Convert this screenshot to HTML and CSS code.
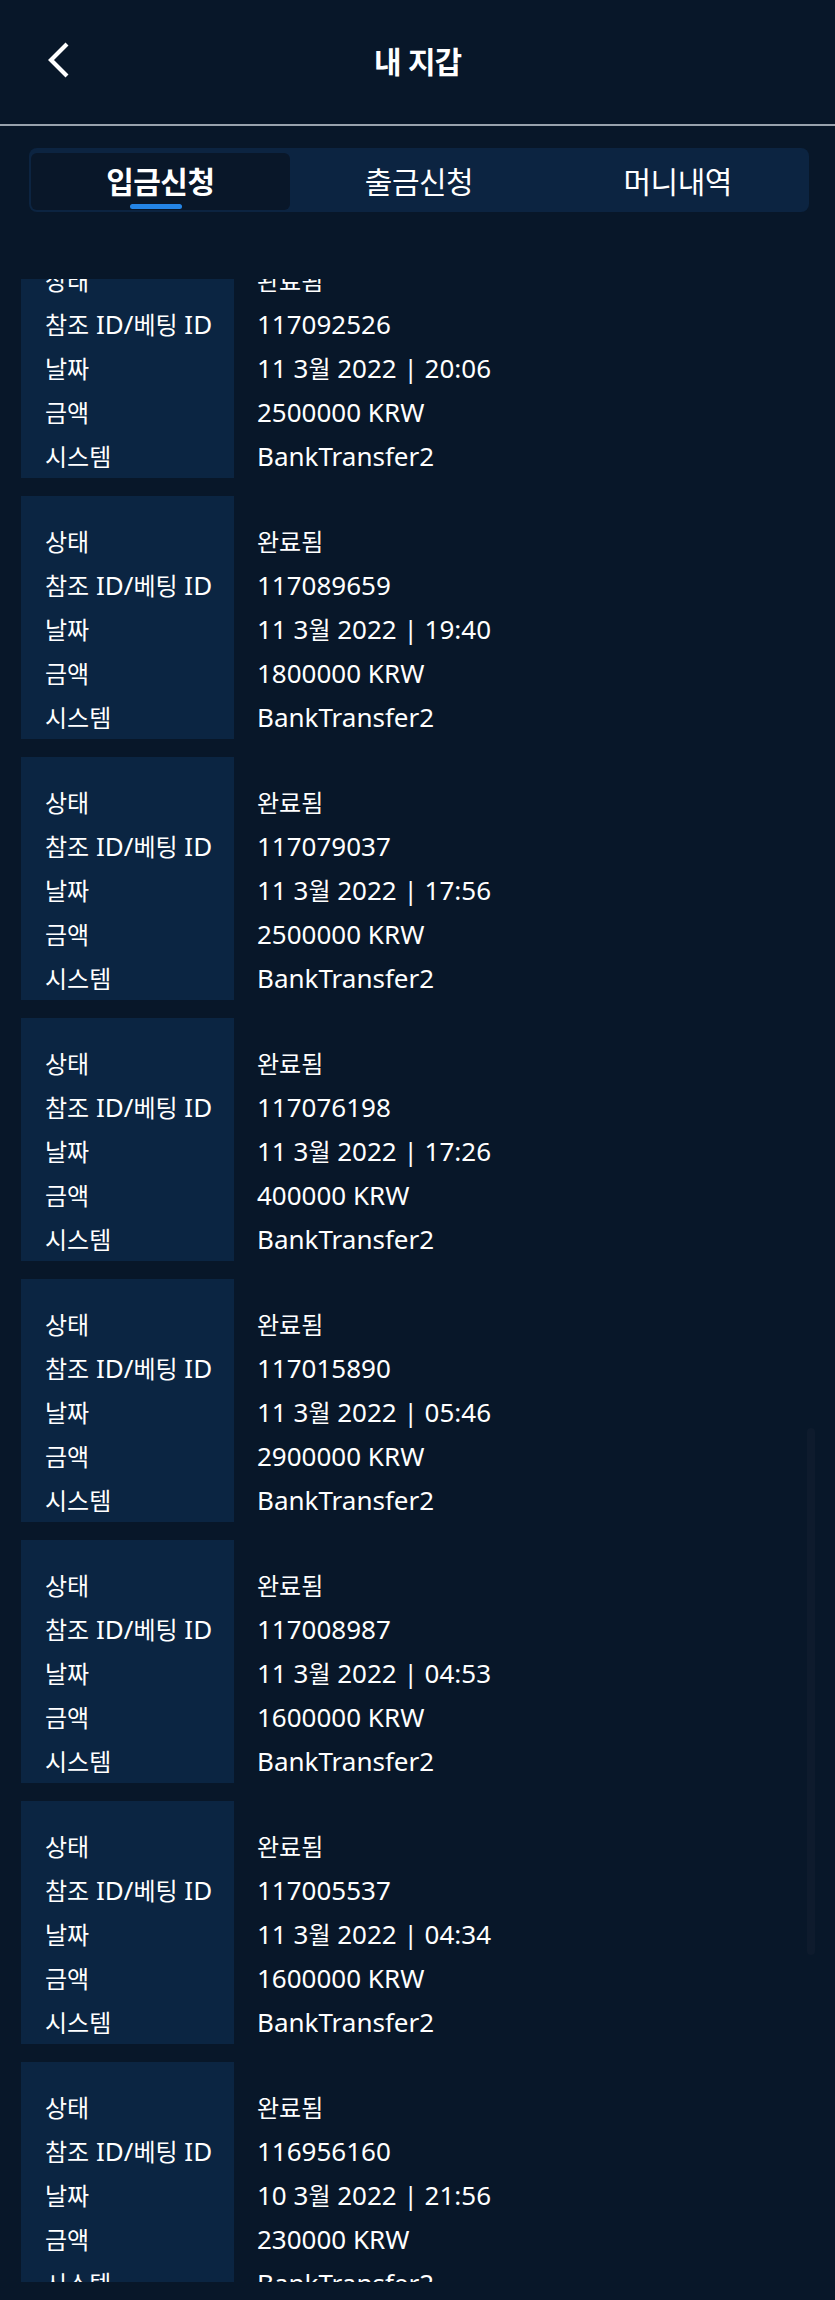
FILE: index.html
```html
<!DOCTYPE html>
<html lang="ko">
<head>
<meta charset="utf-8">
<title>내 지갑</title>
<link rel="stylesheet" href="styles.css">
</head>
<body>
<header class="topbar">
  <div class="topbar-left">
    <svg class="back" width="24" height="36" viewBox="0 0 24 36"><polyline points="20,2 4,18 20,34" fill="none" stroke="#ffffff" stroke-width="4.2" stroke-linejoin="miter"/></svg>
  </div>
  <h1 class="title">내 지갑</h1>
  <div></div>
</header>
<div class="divider"></div>
<nav class="tabs-wrap">
  <div class="tabs">
    <div class="tab active">입금신청</div>
    <div class="tab">출금신청</div>
    <div class="tab">머니내역</div>
  </div>
</nav>
<main class="viewport">
  <div class="list">
    <div class="card">
      <div class="labels"><div><span class="ko">상태</span></div><div><span class="ko">참조</span> ID/<span class="ko">베팅</span> ID</div><div><span class="ko">날짜</span></div><div><span class="ko">금액</span></div><div><span class="ko">시스템</span></div></div>
      <div class="values"><div><span class="ko">완료됨</span></div><div>117092526</div><div>11 3<span class="ko">월</span> 2022 | 20:06</div><div>2500000 KRW</div><div>BankTransfer2</div></div>
    </div>
    <div class="card">
      <div class="labels"><div><span class="ko">상태</span></div><div><span class="ko">참조</span> ID/<span class="ko">베팅</span> ID</div><div><span class="ko">날짜</span></div><div><span class="ko">금액</span></div><div><span class="ko">시스템</span></div></div>
      <div class="values"><div><span class="ko">완료됨</span></div><div>117089659</div><div>11 3<span class="ko">월</span> 2022 | 19:40</div><div>1800000 KRW</div><div>BankTransfer2</div></div>
    </div>
    <div class="card">
      <div class="labels"><div><span class="ko">상태</span></div><div><span class="ko">참조</span> ID/<span class="ko">베팅</span> ID</div><div><span class="ko">날짜</span></div><div><span class="ko">금액</span></div><div><span class="ko">시스템</span></div></div>
      <div class="values"><div><span class="ko">완료됨</span></div><div>117079037</div><div>11 3<span class="ko">월</span> 2022 | 17:56</div><div>2500000 KRW</div><div>BankTransfer2</div></div>
    </div>
    <div class="card">
      <div class="labels"><div><span class="ko">상태</span></div><div><span class="ko">참조</span> ID/<span class="ko">베팅</span> ID</div><div><span class="ko">날짜</span></div><div><span class="ko">금액</span></div><div><span class="ko">시스템</span></div></div>
      <div class="values"><div><span class="ko">완료됨</span></div><div>117076198</div><div>11 3<span class="ko">월</span> 2022 | 17:26</div><div>400000 KRW</div><div>BankTransfer2</div></div>
    </div>
    <div class="card">
      <div class="labels"><div><span class="ko">상태</span></div><div><span class="ko">참조</span> ID/<span class="ko">베팅</span> ID</div><div><span class="ko">날짜</span></div><div><span class="ko">금액</span></div><div><span class="ko">시스템</span></div></div>
      <div class="values"><div><span class="ko">완료됨</span></div><div>117015890</div><div>11 3<span class="ko">월</span> 2022 | 05:46</div><div>2900000 KRW</div><div>BankTransfer2</div></div>
    </div>
    <div class="card">
      <div class="labels"><div><span class="ko">상태</span></div><div><span class="ko">참조</span> ID/<span class="ko">베팅</span> ID</div><div><span class="ko">날짜</span></div><div><span class="ko">금액</span></div><div><span class="ko">시스템</span></div></div>
      <div class="values"><div><span class="ko">완료됨</span></div><div>117008987</div><div>11 3<span class="ko">월</span> 2022 | 04:53</div><div>1600000 KRW</div><div>BankTransfer2</div></div>
    </div>
    <div class="card">
      <div class="labels"><div><span class="ko">상태</span></div><div><span class="ko">참조</span> ID/<span class="ko">베팅</span> ID</div><div><span class="ko">날짜</span></div><div><span class="ko">금액</span></div><div><span class="ko">시스템</span></div></div>
      <div class="values"><div><span class="ko">완료됨</span></div><div>117005537</div><div>11 3<span class="ko">월</span> 2022 | 04:34</div><div>1600000 KRW</div><div>BankTransfer2</div></div>
    </div>
    <div class="card">
      <div class="labels"><div><span class="ko">상태</span></div><div><span class="ko">참조</span> ID/<span class="ko">베팅</span> ID</div><div><span class="ko">날짜</span></div><div><span class="ko">금액</span></div><div><span class="ko">시스템</span></div></div>
      <div class="values"><div><span class="ko">완료됨</span></div><div>116956160</div><div>10 3<span class="ko">월</span> 2022 | 21:56</div><div>230000 KRW</div><div>BankTransfer2</div></div>
    </div>
  </div>
  <div class="scrollbar"></div>
</main>
</body>
</html>
```
FILE: styles.css
```css
* { box-sizing: border-box; }
html, body {
  margin: 0;
  padding: 0;
  background: #081729;
  color: #ffffff;
  font-family: "Noto Sans", "Noto Sans CJK KR", sans-serif;
}
body { width: 835px; height: 2300px; overflow: hidden; }

.topbar {
  height: 124px;
  display: grid;
  grid-template-columns: 1fr auto 1fr;
  align-items: center;
}
.topbar-left { padding-left: 47px; display: flex; align-items: center; }
.back { display: block; margin-top: -4px; }
.title {
  margin: 0 0 4px;
  font-family: "Noto Sans CJK KR", sans-serif;
  font-weight: 700;
  font-size: 30px;
  line-height: 1;
  letter-spacing: -1px;
}

.divider { height: 2px; background: #98a2ad; }

.tabs-wrap { padding: 22px 26px 0 29px; }
.tabs {
  display: flex;
  height: 64px;
  padding: 5px 2px 2px 2px;
  background: #0c2441;
  border-radius: 8px;
}
.tab {
  flex: 1;
  position: relative;
  display: flex;
  align-items: center;
  justify-content: center;
  font-family: "Noto Sans CJK KR", sans-serif;
  font-size: 30px;
  letter-spacing: -0.5px;
  color: #ffffff;
  padding-bottom: 3px;
}
.tab.active {
  background: #091729;
  border-radius: 6px;
  font-weight: 700;
}
.tab.active::after {
  content: "";
  position: absolute;
  left: 50%;
  bottom: 1px;
  width: 52px;
  height: 5px;
  margin-left: -30px;
  border-radius: 3px;
  background: #2485e6;
}

.viewport {
  position: relative;
  margin-top: 67px;
  height: 2003px;
  overflow: hidden;
}
.list {
  margin-top: -44px;
  padding-left: 21px;
  display: flex;
  flex-direction: column;
  gap: 18px;
}
.card { display: flex; }
.labels {
  width: 213px;
  background: #0b2542;
  padding: 23px 0 0 24px;
}
.values { padding: 23px 0 0 23px; }
.labels > div, .values > div {
  height: 44px;
  line-height: 44px;
  font-size: 26px;
  white-space: nowrap;
}
.ko {
  font-family: "Noto Sans CJK KR", sans-serif;
  font-size: 24px;
}

.scrollbar {
  position: absolute;
  right: 20px;
  top: 1149px;
  width: 8px;
  height: 527px;
  border-radius: 4px;
  background: #0e1b2d;
}
```
